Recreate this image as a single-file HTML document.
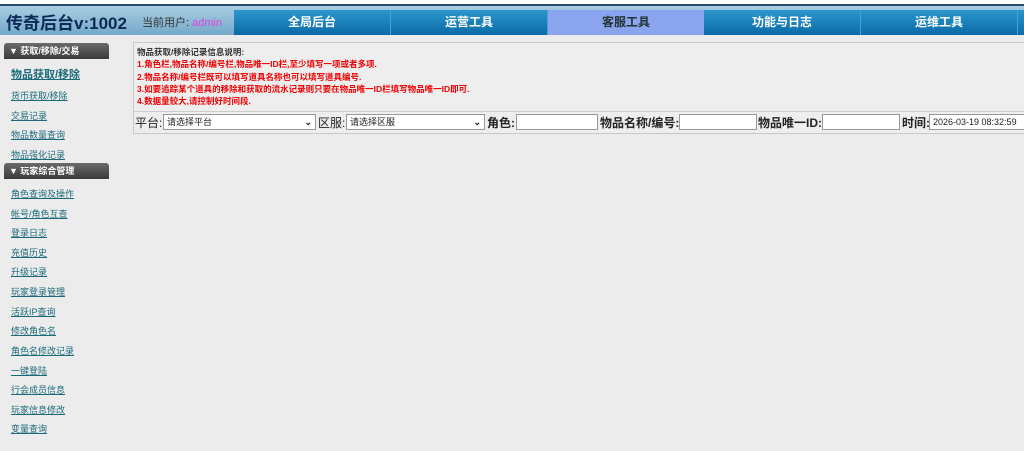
<!DOCTYPE html>
<html><head><meta charset="utf-8"><style>
*{margin:0;padding:0;box-sizing:border-box}
body{width:1024px;height:451px;overflow:hidden;background:#ececec;font-family:"Liberation Sans","Noto Sans CJK SC",sans-serif;position:relative}
.topline{position:absolute;left:0;top:0;width:1024px;height:6px;background:#fff;border-bottom:2px solid #2a4a6a}
.hdr{position:absolute;left:0;top:6px;width:1024px;height:29px;background:linear-gradient(#a9cde2,#74a9ca)}
.title{position:absolute;left:6px;top:9px;font-size:17px;font-weight:bold;color:#0b2a55;white-space:nowrap}
.user{position:absolute;left:142px;top:14px;font-size:11px;color:#333}
.user span{color:#e23fe0}
.nav{position:absolute;top:10px;height:25px;width:157px;background:linear-gradient(#2c97cf,#0a6aa6);color:#fff;font-size:12px;font-weight:bold;text-align:center;line-height:25px;border-right:1px solid #4aa0d0}
.nav.act{background:#8aa4ee;color:#233}
.side{position:absolute;left:0;top:38px;width:112px;height:413px;background:#ececec}
.sh{position:absolute;left:4px;width:105px;height:16px;background:linear-gradient(#6a6a6a,#3a3a3a);border-radius:3px 3px 0 0;color:#fff;font-size:9px;font-weight:bold;line-height:16px;padding-left:5px}
.si{position:absolute;left:11px;font-size:9px;color:#1a6a7a;text-decoration:underline}
.box{position:absolute;left:133px;top:42px;width:900px;height:92px;border:1px solid #c8c8c8;background:#eee}
.notes{position:absolute;left:137px;top:46px;font-size:8.5px;line-height:12.3px;font-weight:bold;color:#e00}
.notes .h{color:#333}
.form{position:absolute;left:133px;top:111px;width:900px;height:20px;border-top:1px solid #ccc;font-size:12px;color:#222;white-space:nowrap}
.form span{position:absolute;top:2px;font-weight:bold}
.f{position:absolute;top:2px;height:16px;background:#fff;border:1px solid #999;font-size:9px;line-height:14px;padding-left:3px;color:#222}
</style></head><body>
<div class="topline"></div>
<div class="hdr"></div>
<div class="title">传奇后台v:1002</div>
<div class="user">当前用户: <span>admin</span></div>
<div class="nav" style="left:234px">全局后台</div>
<div class="nav" style="left:391px">运营工具</div>
<div class="nav act" style="left:548px">客服工具</div>
<div class="nav" style="left:704px">功能与日志</div>
<div class="nav" style="left:861px">运维工具</div>
<div class="nav" style="left:1018px;width:10px"></div>
<div class="side"></div>
<div class="sh" style="top:43px">▼ 获取/移除/交易</div>
<div class="si" style="top:66px;font-size:11px;font-weight:bold">物品获取/移除</div>
<div class="si" style="top:89px">货币获取/移除</div>
<div class="si" style="top:109px">交易记录</div>
<div class="si" style="top:128px">物品数量查询</div>
<div class="si" style="top:148px">物品强化记录</div>
<div class="sh" style="top:163px">▼ 玩家综合管理</div>
<div class="si" style="top:187px">角色查询及操作</div>
<div class="si" style="top:207px">帐号/角色互查</div>
<div class="si" style="top:226px">登录日志</div>
<div class="si" style="top:246px">充值历史</div>
<div class="si" style="top:265px">升级记录</div>
<div class="si" style="top:285px">玩家登录管理</div>
<div class="si" style="top:305px">活跃IP查询</div>
<div class="si" style="top:324px">修改角色名</div>
<div class="si" style="top:344px">角色名修改记录</div>
<div class="si" style="top:364px">一键登陆</div>
<div class="si" style="top:383px">行会成员信息</div>
<div class="si" style="top:403px">玩家信息修改</div>
<div class="si" style="top:422px">变量查询</div>
<div class="box"></div>
<div class="notes"><div class="h">物品获取/移除记录信息说明:</div>
<div>1.角色栏,物品名称/编号栏,物品唯一ID栏,至少填写一项或者多项.</div>
<div>2.物品名称/编号栏既可以填写道具名称也可以填写道具编号.</div>
<div>3.如要追踪某个道具的移除和获取的流水记录则只要在物品唯一ID栏填写物品唯一ID即可.</div>
<div>4.数据量较大,请控制好时间段.</div></div>
<div class="form">
<span style="left:2px;font-weight:normal">平台:</span><div class="f" style="left:30px;width:153px">请选择平台<b style="position:absolute;right:3px;font-size:9px">⌄</b></div>
<span style="left:185px;font-weight:normal">区服:</span><div class="f" style="left:213px;width:139px">请选择区服<b style="position:absolute;right:3px;font-size:9px">⌄</b></div>
<span style="left:354px">角色:</span><div class="f" style="left:383px;width:82px"></div>
<span style="left:467px">物品名称/编号:</span><div class="f" style="left:546px;width:78px"></div>
<span style="left:625px">物品唯一ID:</span><div class="f" style="left:689px;width:78px"></div>
<span style="left:769px">时间:</span><div class="f" style="left:796px;width:110px">2026-03-19 08:32:59</div>
</div>
</body></html>
